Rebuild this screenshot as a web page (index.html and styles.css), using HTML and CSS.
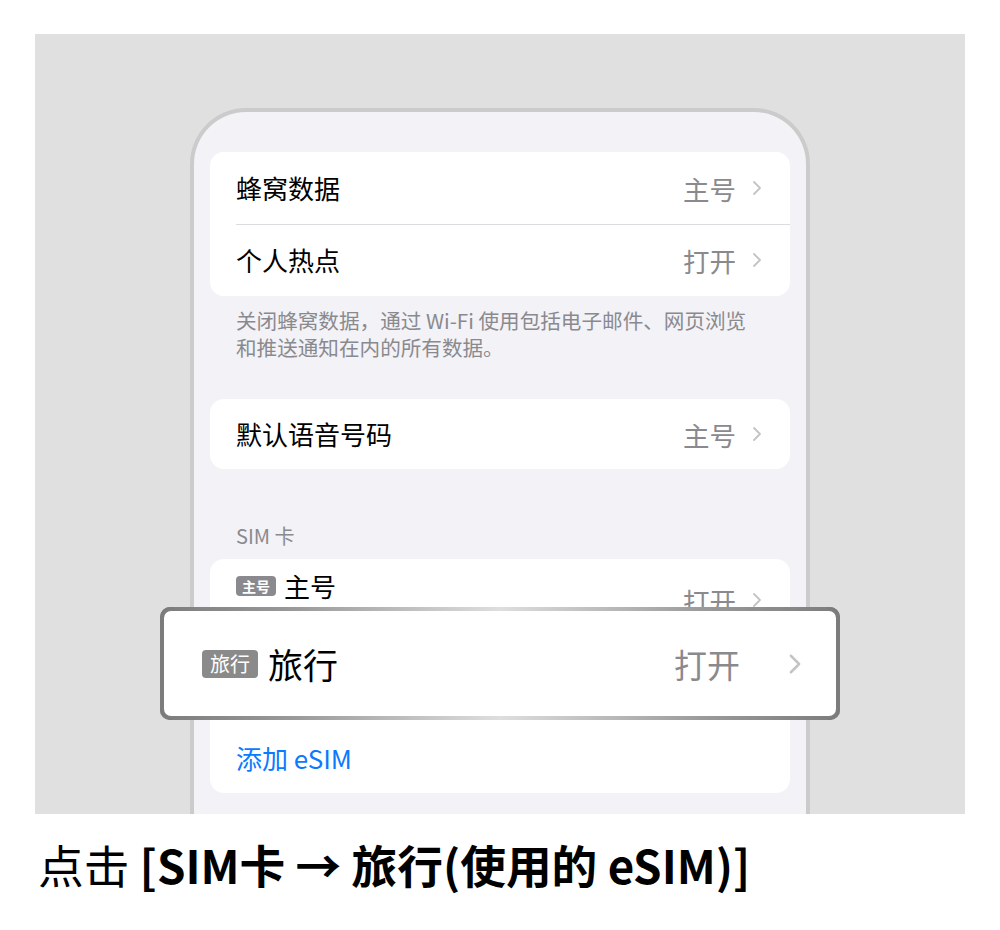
FILE: index.html
```html
<!DOCTYPE html>
<html lang="zh-CN">

<head>
    <meta charset="UTF-8">
    <meta name="viewport" content="width=device-width, initial-scale=1.0">
    <title>使用 eSIM</title>
    <link rel="stylesheet" href="styles.css">
</head>

<body>
    <div class="panel">
        <div class="phone">
            <!-- 蜂窝数据 / 个人热点 -->
            <div class="card">
                <div class="row">
                    <span class="label">蜂窝数据</span>
                    <span class="value">主号</span>
                    <svg class="chevron" viewBox="0 0 10 16"><polyline points="2,2 8,8 2,14" /></svg>
                </div>
                <div class="row">
                    <span class="label">个人热点</span>
                    <span class="value">打开</span>
                    <svg class="chevron" viewBox="0 0 10 16"><polyline points="2,2 8,8 2,14" /></svg>
                </div>
            </div>
            <p class="note">关闭蜂窝数据，通过 Wi-Fi 使用包括电子邮件、网页浏览<br>和推送通知在内的所有数据。</p>

            <div class="card card-single">
                <div class="row">
                    <span class="label">默认语音号码</span>
                    <span class="value">主号</span>
                    <svg class="chevron" viewBox="0 0 10 16"><polyline points="2,2 8,8 2,14" /></svg>
                </div>
            </div>

            <div class="section-title">SIM 卡</div>
            <div class="card">
                <div class="row row-sim">
                    <span class="label label-top"><span class="badge">主号</span>主号</span>
                    <span class="value">打开</span>
                    <svg class="chevron" viewBox="0 0 10 16"><polyline points="2,2 8,8 2,14" /></svg>
                </div>
                <!-- 被放大框盖住的那一行 -->
                <div class="row row-hidden"></div>
                <div class="row">
                    <span class="link">添加 eSIM</span>
                </div>
            </div>
        </div>

        <!-- 放大显示的旅行卡 -->
        <div class="zoom">
            <div class="zoom-inner">
                <span class="zoom-label"><span class="zoom-badge">旅行</span>旅行</span>
                <span class="zoom-value">打开</span>
                <svg class="zoom-chevron" viewBox="0 0 10 16"><polyline points="2,2 8,8 2,14" /></svg>
            </div>
        </div>
    </div>

    <p class="caption">点击 <b>[SIM卡 → 旅行(使用的 eSIM)]</b></p>
</body>

</html>
```

FILE: styles.css
```css
/* 页面 */
body {
    margin: 0;
    padding: 0;
    background-color: #fff;
    font-family: "Noto Sans CJK SC", "Liberation Sans", sans-serif;
}

.panel {
    position: relative;
    margin: 34px 35px 0;
    height: 780px;
    padding-top: 74px;
    box-sizing: border-box;
    background-color: #e0e0e0;
    overflow: hidden;
}

.phone {
    width: 620px;
    height: 720px;
    margin: 0 auto;
    padding: 40px 16px 0;
    box-sizing: border-box;
    background-color: #f2f2f7;
    border: 4px solid #cbcbcb;
    border-bottom: none;
    border-radius: 56px 56px 0 0;
}

.card {
    background-color: #fff;
    border-radius: 14px;
    overflow: hidden;
}

.row {
    display: flex;
    align-items: center;
    height: 72px;
    padding: 0 28px 0 26px;
    box-sizing: border-box;
    position: relative;
}

.row + .row::before {
    content: "";
    position: absolute;
    top: 0;
    left: 26px;
    right: 0;
    border-top: 1px solid #dcdce0;
}

.card-single .row {
    height: 70px;
}

.label {
    flex: 1;
    font-size: 26px;
    color: #000;
    line-height: 30px;
    display: flex;
    align-items: center;
}

.value {
    font-size: 26.5px;
    color: #8a8a8e;
    margin-right: 16px;
}

.chevron {
    width: 10px;
    height: 16px;
}

.chevron polyline,
.zoom-chevron polyline {
    fill: none;
    stroke: #c4c4c7;
    stroke-width: 1.8;
    stroke-linecap: round;
    stroke-linejoin: round;
}

.note {
    margin: 0;
    padding: 11px 26px 0;
    font-size: 20.6px;
    line-height: 27px;
    color: #8a8a8e;
    white-space: nowrap;
}

.card-single {
    margin-top: 38px;
}

.section-title {
    margin: 56px 0 0;
    padding: 0 26px 12px;
    font-size: 20px;
    line-height: 22px;
    color: #8a8a8e;
}

.row-sim {
    height: 82px;
}

.label-top {
    align-self: flex-start;
    margin-top: 12px;
}

.row-hidden {
    height: 80px;
}

.row-hidden::before,
.row-hidden + .row::before {
    display: none;
}

.badge {
    display: inline-block;
    width: 40px;
    height: 20px;
    line-height: 20px;
    margin-right: 8px;
    text-align: center;
    font-size: 14px;
    font-weight: 700;
    color: #fff;
    background-color: #8a8a8e;
    border-radius: 4px;
}

.link {
    font-size: 26px;
    color: #0a7aff;
}

/* 放大框 */
.zoom {
    position: absolute;
    left: 125px;
    top: 573px;
    width: 680px;
    height: 113px;
    padding: 4px;
    box-sizing: border-box;
    border-radius: 10px;
    background: linear-gradient(90deg, #7c7c7c 0%, #9a9a9a 20%, #dedede 50%, #9a9a9a 80%, #7c7c7c 100%);
    box-shadow: inset 4px 0 0 #7c7c7c, inset -4px 0 0 #7c7c7c;
}

.zoom-inner {
    display: flex;
    align-items: center;
    height: 100%;
    padding: 0 34px 0 38px;
    background-color: #fff;
    border-radius: 7px;
}

.zoom-label {
    flex: 1;
    display: flex;
    align-items: center;
    font-size: 35px;
    color: #000;
}

.zoom-badge {
    display: inline-block;
    width: 56px;
    height: 28px;
    line-height: 28px;
    margin-right: 10px;
    text-align: center;
    font-size: 20px;
    color: #fff;
    background-color: #8a8a8a;
    border-radius: 4px;
}

.zoom-value {
    font-size: 33px;
    color: #8a8a8e;
    margin-right: 48px;
}

.zoom-chevron {
    width: 14px;
    height: 22px;
}

.caption {
    margin: 20px 0 0;
    padding-left: 38px;
    font-size: 45.7px;
    line-height: 60px;
    color: #000;
}

.caption b {
    font-weight: 700;
}
```
